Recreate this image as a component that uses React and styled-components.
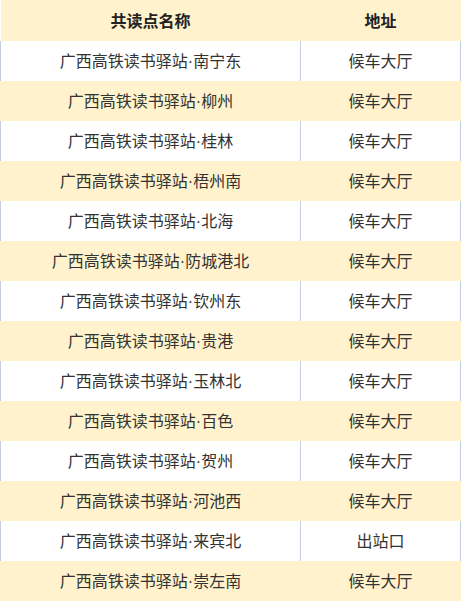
import React from 'react';
import styled, { createGlobalStyle } from 'styled-components';

const stations = [
  ['南宁东', '候车大厅'],
  ['柳州', '候车大厅'],
  ['桂林', '候车大厅'],
  ['梧州南', '候车大厅'],
  ['北海', '候车大厅'],
  ['防城港北', '候车大厅'],
  ['钦州东', '候车大厅'],
  ['贵港', '候车大厅'],
  ['玉林北', '候车大厅'],
  ['百色', '候车大厅'],
  ['贺州', '候车大厅'],
  ['河池西', '候车大厅'],
  ['来宾北', '出站口'],
  ['崇左南', '候车大厅']
];

const GlobalStyle = createGlobalStyle`
  body {
    margin: 0;
    background: #fff;
    font-family: "Noto Sans CJK SC", "Noto Sans", sans-serif;
  }
`;

export default function App() {
  return (
    <>
      <GlobalStyle />
      <Table>
        <thead>
          <HeadRow>
            <HeadCell $wide>共读点名称</HeadCell>
            <HeadCell>地址</HeadCell>
          </HeadRow>
        </thead>
        <tbody>
          {stations.map(([name, place], i) => (
            <Row key={name} $striped={i % 2 === 1}>
              <Cell $striped={i % 2 === 1} $wide>
                广西高铁读书驿站<Dot>·</Dot>{name}
              </Cell>
              <Cell $striped={i % 2 === 1}>{place}</Cell>
            </Row>
          ))}
        </tbody>
      </Table>
    </>
  );
}

const Table = styled.table`
  width: 461px;
  border-collapse: collapse;
  table-layout: fixed;
  color: #333;
  font-size: 16px;
`;

const HeadRow = styled.tr`
  height: 41px;
  background: #fff2cc;
`;

const HeadCell = styled.th`
  width: ${props => (props.$wide ? '300px' : 'auto')};
  padding: 0 0 2px;
  font-weight: bold;
  color: #222;
  text-align: center;
  border: 0;
`;

const Row = styled.tr`
  height: 40px;
  background: ${props => (props.$striped ? '#fff2cc' : '#ffffff')};
`;

const Cell = styled.td`
  padding: 0 0 2px;
  text-align: center;
  border-left: 1px solid
    ${props => (props.$striped ? '#fff2cc' : '#c5cbe0')};
  border-right: 1px solid
    ${props => (props.$striped ? '#fff2cc' : '#c5cbe0')};
`;

const Dot = styled.span`
  font-family: "Liberation Sans", sans-serif;
`;
